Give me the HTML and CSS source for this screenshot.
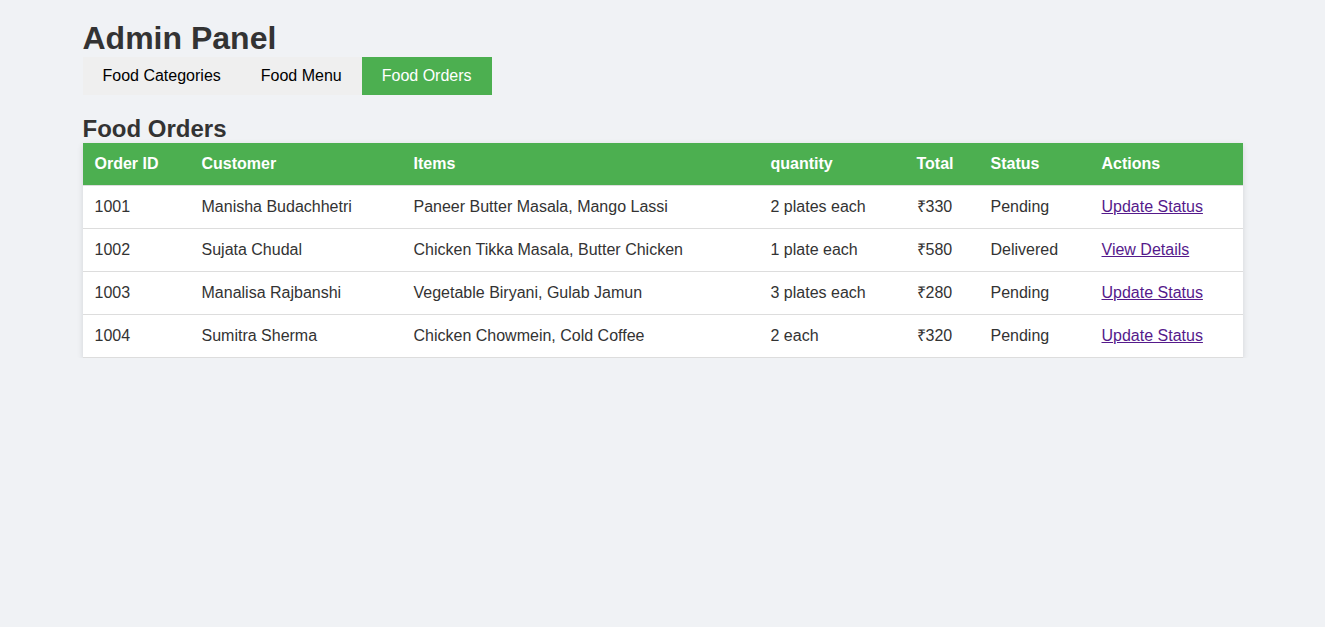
FILE: index.html
```html
<!DOCTYPE html>
<html lang="en">
<head>
<meta charset="utf-8">
<title>Admin Panel</title>
<link rel="stylesheet" href="styles.css">
</head>
<body>
<div class="container">
  <h1 class="title">Admin Panel</h1>
  <nav class="tabs">
    <button class="tab">Food Categories</button>
    <button class="tab">Food Menu</button>
    <button class="tab active">Food Orders</button>
  </nav>
  <h2 class="section-title">Food Orders</h2>
  <table class="orders">
    <colgroup>
      <col class="c-id"><col class="c-cust"><col class="c-items"><col class="c-qty"><col class="c-total"><col class="c-status"><col class="c-act">
    </colgroup>
    <thead>
      <tr><th>Order ID</th><th>Customer</th><th>Items</th><th>quantity</th><th>Total</th><th>Status</th><th>Actions</th></tr>
    </thead>
    <tbody>
      <tr><td>1001</td><td>Manisha Budachhetri</td><td>Paneer Butter Masala, Mango Lassi</td><td>2 plates each</td><td>₹330</td><td>Pending</td><td><a href="#" class="link">Update Status</a></td></tr>
      <tr><td>1002</td><td>Sujata Chudal</td><td>Chicken Tikka Masala, Butter Chicken</td><td>1 plate each</td><td>₹580</td><td>Delivered</td><td><a href="#" class="link">View Details</a></td></tr>
      <tr><td>1003</td><td>Manalisa Rajbanshi</td><td>Vegetable Biryani, Gulab Jamun</td><td>3 plates each</td><td>₹280</td><td>Pending</td><td><a href="#" class="link">Update Status</a></td></tr>
      <tr><td>1004</td><td>Sumitra Sherma</td><td>Chicken Chowmein, Cold Coffee</td><td>2 each</td><td>₹320</td><td>Pending</td><td><a href="#" class="link">Update Status</a></td></tr>
    </tbody>
  </table>
</div>
</body>
</html>
```

FILE: styles.css
```css
html, body {
  margin: 0;
  padding: 0;
}
body {
  background: #f0f2f5;
  font-family: "Liberation Sans", Arial, sans-serif;
  color: #333;
}
.container {
  max-width: 1160px;
  margin: 0 auto;
  padding-top: 20px;
}
.title {
  margin: 0;
  font-size: 32px;
  font-weight: bold;
  color: #333;
}
.tabs {
  display: flex;
}
.tab {
  font-family: "Liberation Sans", Arial, sans-serif;
  font-size: 16px;
  line-height: 18px;
  padding: 10px 20px;
  border: none;
  background: #efefef;
  color: #000;
  margin: 0;
  cursor: pointer;
}
.tab.active {
  background: #4caf50;
  color: #fff;
}
.section-title {
  margin: 20px 0 0;
  font-size: 24px;
  font-weight: bold;
  color: #333;
}
.orders {
  width: 100%;
  border-collapse: collapse;
  background: #fff;
  box-shadow: 0 2px 6px rgba(0, 0, 0, 0.12);
  table-layout: fixed;
}
.c-id { width: 107px; }
.c-cust { width: 212px; }
.c-items { width: 357px; }
.c-qty { width: 146px; }
.c-total { width: 74px; }
.c-status { width: 111px; }
.c-act { width: 153px; }
.orders th,
.orders td {
  padding: 12px;
  text-align: left;
  font-size: 16px;
  line-height: 18px;
  border-bottom: 1px solid #ddd;
  white-space: nowrap;
}
.orders th {
  background: #4caf50;
  color: #fff;
  font-weight: bold;
}
.orders td {
  color: #333;
}
.link {
  color: #551a8b;
  text-decoration: underline;
}
```
